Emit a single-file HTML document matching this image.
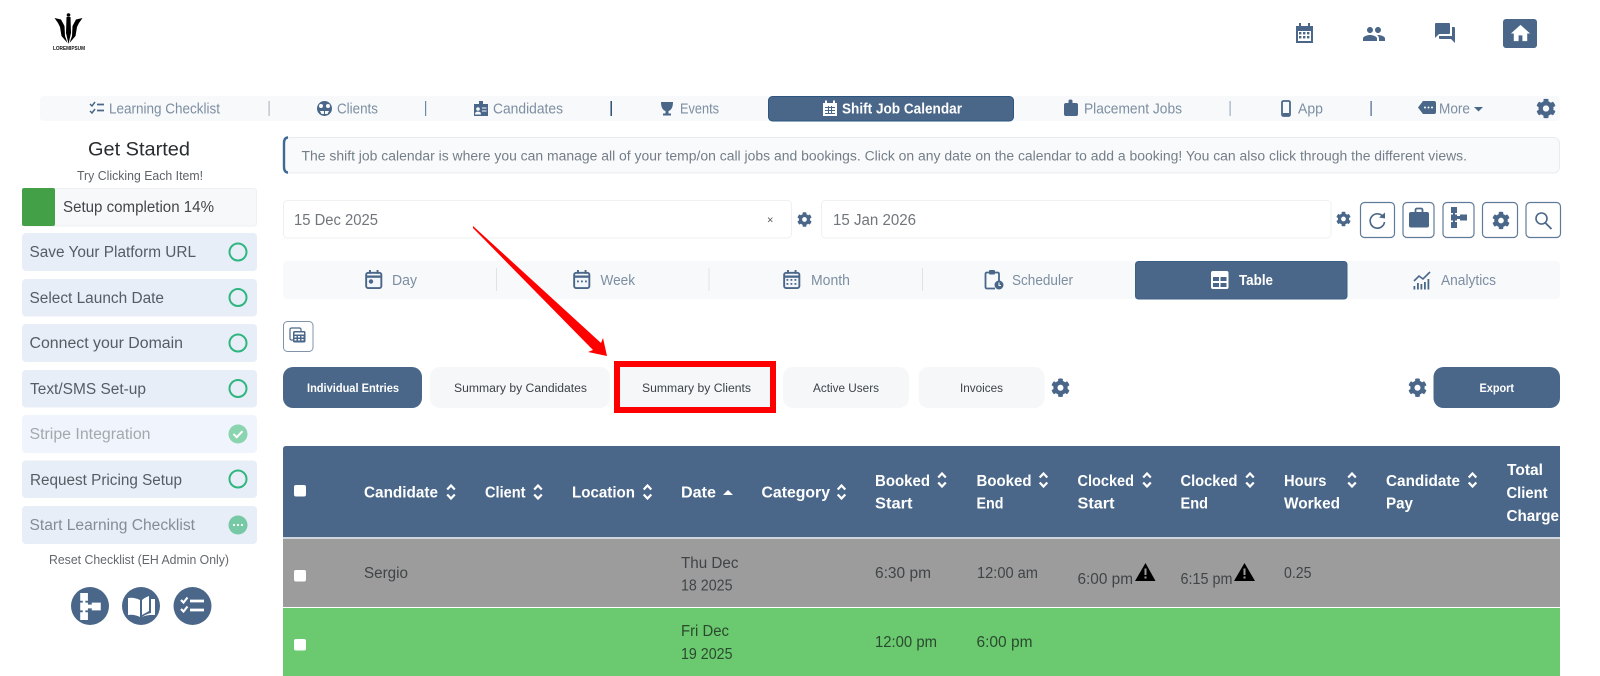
<!DOCTYPE html>
<html lang="en">
<head>
<meta charset="utf-8">
<title>Shift Job Calendar</title>
<style>
html,body{margin:0;padding:0;background:#fff;width:1600px;height:676px;overflow:hidden}
svg{display:block}
text{font-family:"Liberation Sans",sans-serif}
.n{font-size:14.5px;fill:#7c8ea1}
.v{font-size:15px}
.i{font-size:15.5px;fill:#565c62}
.s{font-size:11.5px;fill:#3c4248}
.w{font-weight:bold;fill:#fff}
.h{font-size:15.5px;font-weight:bold;fill:#fff}
.c{font-size:15.5px;fill:#3f4446}
.d{fill:#2a4a2e}
.p{fill:#4a6789}
</style>
</head>
<body>
<svg xmlns="http://www.w3.org/2000/svg" width="1600" height="676" viewBox="0 0 1600 676">
<defs>
<symbol id="g" viewBox="0 0 512 512"><path d="M487.4 315.7l-42.6-24.6c4.3-23.2 4.3-47 0-70.2l42.6-24.6c4.9-2.8 7.1-8.6 5.5-14-11.1-35.6-30-67.8-54.7-94.6-3.8-4.1-10-5.1-14.8-2.3L380.8 110c-17.9-15.4-38.5-27.3-60.8-35.1V25.8c0-5.6-3.9-10.5-9.4-11.7-36.7-8.2-74.3-7.8-109.2 0-5.5 1.2-9.4 6.1-9.4 11.7V75c-22.2 7.9-42.8 19.8-60.8 35.1L88.7 85.5c-4.9-2.8-11-1.9-14.8 2.3-24.7 26.7-43.6 58.9-54.7 94.6-1.7 5.4.6 11.2 5.5 14L67.3 221c-4.3 23.2-4.3 47 0 70.2l-42.6 24.6c-4.9 2.8-7.1 8.6-5.5 14 11.1 35.6 30 67.8 54.7 94.6 3.8 4.1 10 5.1 14.8 2.3l42.6-24.6c17.9 15.4 38.5 27.3 60.8 35.1v49.2c0 5.6 3.9 10.5 9.4 11.7 36.7 8.2 74.3 7.8 109.2 0 5.5-1.2 9.4-6.1 9.4-11.7v-49.2c22.2-7.9 42.8-19.8 60.8-35.1l42.6 24.6c4.9 2.8 11 1.9 14.8-2.3 24.7-26.7 43.6-58.9 54.7-94.6 1.5-5.5-.7-11.3-5.6-14.1zM256 336c-44.1 0-80-35.9-80-80s35.9-80 80-80 80 35.9 80 80-35.9 80-80 80z"/></symbol>
<symbol id="sort" viewBox="0 0 10 18"><path d="M1.2 6.5L5 2.5L8.8 6.5M1.2 11.5L5 15.5L8.8 11.5" fill="none" stroke="#fff" stroke-width="2.2"/></symbol>
<symbol id="flow" viewBox="0 0 16 21"><path d="M0 0h6v6H0zM2 6h2v9H2zM0 7.5h6v6H0zM6 9h3v3H6zM9 7.5h7v6H9zM0 15h6v6H0z"/></symbol>
<symbol id="cal" viewBox="0 0 18 20"><rect x="1" y="3" width="16" height="16" rx="2" fill="#f3f6fa" stroke="#4a6789" stroke-width="2"/><path d="M1 7h16" stroke="#4a6789" stroke-width="2.4"/><path d="M5 0v4M13 0v4" stroke="#4a6789" stroke-width="2"/></symbol>
</defs>

<!-- logo -->
<circle cx="68.5" cy="15" r="1.8" fill="#000"/>
<polygon points="66.5,17 70.5,17 71,33 68.500,44 66,33"/>
<polygon points="54.500,18 61,19.500 64.500,26 65,36 67.500,43 61.500,36 60,27 58,23"/>
<polygon points="82.500,18 76,19.500 72.500,26 72,36 69.500,43 75.500,36 77,27 79,23"/>
<text x="53" y="50" font-size="5.5" font-weight="bold" textLength="32" lengthAdjust="spacingAndGlyphs" fill="#111">LOREMIPSUM</text>

<!-- top right icons -->
<path class="p" d="M1296 26h3v-3h2v3h7v-3h2v3h3v17h-17z"/>
<g fill="#fff"><rect x="1298" y="31" width="13" height="10"/></g>
<g class="p"><rect x="1299" y="32" width="2.4" height="2.4"/><rect x="1303" y="32" width="2.4" height="2.4"/><rect x="1307" y="32" width="2.4" height="2.4"/><rect x="1299" y="36" width="2.4" height="2.4"/><rect x="1303" y="36" width="2.4" height="2.4"/><rect x="1307" y="36" width="2.4" height="2.4"/></g>
<svg x="1362" y="22" width="24" height="24" viewBox="0 0 24 24"><path class="p" d="M16 11c1.66 0 2.99-1.34 2.99-3S17.66 5 16 5c-1.66 0-3 1.34-3 3s1.34 3 3 3zm-8 0c1.66 0 2.99-1.34 2.99-3S9.66 5 8 5C6.34 5 5 6.34 5 8s1.34 3 3 3zm0 2c-2.33 0-7 1.17-7 3.5V19h14v-2.5c0-2.33-4.67-3.5-7-3.5zm8 0c-.29 0-.62.02-.97.05 1.16.84 1.97 1.97 1.97 3.45V19h6v-2.5c0-2.33-4.67-3.5-7-3.5z"/></svg>
<svg x="1433" y="21" width="24" height="24" viewBox="0 0 24 24"><path class="p" d="M21 6h-2v9H6v2c0 .55.45 1 1 1h11l4 4V7c0-.55-.45-1-1-1zm-4 6V3c0-.55-.45-1-1-1H3c-.55 0-1 .45-1 1v14l4-4h10c.55 0 1-.45 1-1z"/></svg>
<rect class="p" x="1503" y="19" width="34" height="29" rx="3"/>
<svg x="1509" y="22" width="23" height="23" viewBox="0 0 24 24"><path fill="#fff" d="M10 20v-6h4v6h5v-8h3L12 3 2 12h3v8z"/></svg>

<!-- nav -->
<rect x="40" y="96" width="1520" height="25" rx="4" fill="#f8f9fb"/>
<path d="M90 104l2 2 3-4M90 111l2 2 3-4" fill="none" stroke="#4a6789" stroke-width="1.5"/><path d="M97 104.500h7M97 110.500h7" stroke="#4a6789" stroke-width="1.8"/>
<text class="n" x="109" y="113.500" textLength="111" lengthAdjust="spacingAndGlyphs">Learning Checklist</text>
<rect x="268.500" y="101" width="1.200" height="15" fill="#b5bcc4"/>
<circle class="p" cx="324.500" cy="108.500" r="7.500"/><circle cx="321" cy="106" r="2" fill="#f8f9fb"/><circle cx="328" cy="106" r="2" fill="#f8f9fb"/><path d="M320 111h9l-1.500 3h-2.500v-3h-1v3h-2.500z" fill="#f8f9fb"/>
<text class="n" x="337" y="113.500" textLength="41" lengthAdjust="spacingAndGlyphs">Clients</text>
<rect x="425" y="101" width="1.200" height="15" fill="#6f8aa6"/>
<path class="p" d="M474 104h5v-3h4v3h5v12h-14z"/><circle cx="478" cy="109" r="1.800" fill="#f8f9fb"/><path d="M475.500 114c0-2.500 5-2.500 5 0zM482 108h4.500M482 111h4.500" fill="#f8f9fb" stroke="#f8f9fb" stroke-width=".9"/>
<text class="n" x="493" y="113.500" textLength="70" lengthAdjust="spacingAndGlyphs">Candidates</text>
<rect x="610.500" y="101" width="1.400" height="15" fill="#1f4468"/>
<path class="p" d="M661 102h12c0 4-1 8-4.500 9v2.500h2.500v2h-8v-2h2.500V111c-3.500-1-4.500-5-4.500-9z"/>
<text class="n" x="680" y="113.500" textLength="39" lengthAdjust="spacingAndGlyphs">Events</text>
<rect x="768.500" y="96.500" width="245" height="24.500" rx="4" fill="#4a6789" stroke="#2c5680"/>
<path fill="#fff" d="M823 103h2v-2.500h2v2.500h6v-2.500h2v2.500h2v13h-14z"/><g fill="#4a6789"><rect x="825" y="107" width="10" height="1"/><rect x="825" y="110" width="10" height="1"/><rect x="825" y="113" width="10" height="1"/><rect x="828" y="106" width="1" height="8"/><rect x="831" y="106" width="1" height="8"/></g>
<text class="n w" x="842" y="113.500" textLength="120" lengthAdjust="spacingAndGlyphs">Shift Job Calendar</text>
<path class="p" d="M1064 105q0-2 2-2h2.500v-2q0-1.500 2-1.500t2 1.500v2h3.500q2 0 2 2v9q0 2-2 2h-10q-2 0-2-2z"/>
<text class="n" x="1084" y="113.500" textLength="98" lengthAdjust="spacingAndGlyphs">Placement Jobs</text>
<rect x="1229.500" y="101" width="1.200" height="15" fill="#9fb0c0"/>
<rect x="1282" y="101" width="8" height="15" rx="1.500" fill="none" stroke="#4a6789" stroke-width="1.800"/><rect class="p" x="1283" y="113" width="6" height="2.500"/>
<text class="n" x="1298" y="113.500" textLength="25" lengthAdjust="spacingAndGlyphs">App</text>
<rect x="1370.500" y="101" width="1.200" height="15" fill="#4a6789"/>
<path class="p" d="M1423 101h11q2 0 2 2v9q0 2-2 2h-11l-5-6.500z"/><g fill="#fff"><circle cx="1425" cy="107.500" r="1"/><circle cx="1428.500" cy="107.500" r="1"/><circle cx="1432" cy="107.500" r="1"/></g>
<text class="n" x="1439" y="113.500" textLength="31" lengthAdjust="spacingAndGlyphs">More</text>
<polygon class="p" points="1474,107 1483,107 1478.500,111.500"/>
<use href="#g" x="1536" y="98.500" width="20" height="20" fill="#4a6789"/>

<!-- info -->
<rect x="284" y="137.500" width="1275.500" height="35.500" rx="6" fill="#f9fafc" stroke="#e8ebef"/>
<path d="M288 137.500q-4 0-4 6v23q0 6 4 6" fill="none" stroke="#3d6a94" stroke-width="2.400"/>
<text x="301.500" y="160.500" font-size="13.5" fill="#747e88" textLength="1165.500" lengthAdjust="spacingAndGlyphs">The shift job calendar is where you can manage all of your temp/on call jobs and bookings. Click on any date on the calendar to add a booking! You can also click through the different views.</text>

<!-- sidebar -->
<text x="88" y="155.500" font-size="19" fill="#2a2d30" textLength="102" lengthAdjust="spacingAndGlyphs">Get Started</text>
<text x="77" y="180" font-size="12.5" fill="#5f6368" textLength="126" lengthAdjust="spacingAndGlyphs">Try Clicking Each Item!</text>
<rect x="22.500" y="188.500" width="234" height="37.500" rx="3" fill="#f7f8fa" stroke="#eef0f2"/>
<rect x="22" y="188" width="33" height="38" rx="2" fill="#43a047"/>
<text x="63" y="212" font-size="15.5" fill="#42464a" textLength="151" lengthAdjust="spacingAndGlyphs">Setup completion 14%</text>

<g fill="#e8eef8">
<rect x="22" y="233" width="235" height="38" rx="4"/>
<rect x="22" y="279" width="235" height="37.500" rx="4"/>
<rect x="22" y="324" width="235" height="38" rx="4"/>
<rect x="22" y="370" width="235" height="37.500" rx="4"/>
<rect x="22" y="415" width="235" height="38" rx="4" fill="#f0f4fc"/>
<rect x="22" y="460.500" width="235" height="37.500" rx="4"/>
<rect x="22" y="506" width="235" height="38" rx="4"/>
</g>
<text class="i" x="29.500" y="257" textLength="166.500" lengthAdjust="spacingAndGlyphs">Save Your Platform URL</text>
<text class="i" x="29.500" y="303" textLength="134.500" lengthAdjust="spacingAndGlyphs">Select Launch Date</text>
<text class="i" x="29.500" y="348" textLength="153.500" lengthAdjust="spacingAndGlyphs">Connect your Domain</text>
<text class="i" x="30" y="394" textLength="116" lengthAdjust="spacingAndGlyphs">Text/SMS Set-up</text>
<text x="29.500" y="439" font-size="15.5" fill="#a3a8ae" textLength="121" lengthAdjust="spacingAndGlyphs">Stripe Integration</text>
<text class="i" x="30" y="485" textLength="152" lengthAdjust="spacingAndGlyphs">Request Pricing Setup</text>
<text x="29.500" y="530" font-size="15.5" fill="#868c92" textLength="165.500" lengthAdjust="spacingAndGlyphs">Start Learning Checklist</text>
<g fill="none" stroke="#2fb67f" stroke-width="2">
<circle cx="238" cy="252" r="8.500"/><circle cx="238" cy="297.500" r="8.500"/><circle cx="238" cy="343" r="8.500"/><circle cx="238" cy="388.500" r="8.500"/><circle cx="238" cy="479" r="8.500"/>
</g>
<circle cx="238" cy="434" r="9.500" fill="#8bd4b0"/><path d="M233.500 434l3.200 3.200 5.800-6" fill="none" stroke="#fff" stroke-width="2"/>
<circle cx="238" cy="525" r="9.500" fill="#76c9a4"/><g fill="#fff"><circle cx="234" cy="525" r="1.100"/><circle cx="238" cy="525" r="1.100"/><circle cx="242" cy="525" r="1.100"/></g>
<text x="49" y="564" font-size="12.5" fill="#63686d" textLength="180" lengthAdjust="spacingAndGlyphs">Reset Checklist (EH Admin Only)</text>
<circle class="p" cx="90" cy="606" r="19"/><circle class="p" cx="141" cy="606" r="19"/><circle class="p" cx="192.500" cy="606" r="19"/>
<use href="#flow" x="80" y="593" width="21" height="27" fill="#fff"/>
<path fill="#fff" d="M128 598q6-1 12 2v17q-6-3-12-2zM142 600q2-2 7-4v15l-7 4zM151 599h4v16q-7-.500-13 2 4-3 9-4z"/>
<path d="M181 600l2.500 2.500 4-5M181 609l2.500 2.500 4-5" fill="none" stroke="#fff" stroke-width="2.200"/><path d="M190 601h14M190 610h14" stroke="#fff" stroke-width="2.800"/>

<!-- date inputs -->
<rect x="283.500" y="200.500" width="508" height="37.500" rx="4" fill="#fff" stroke="#eef0f2"/>
<text x="294" y="225" font-size="15.5" fill="#70767c" textLength="84" lengthAdjust="spacingAndGlyphs">15 Dec 2025</text>
<text x="767" y="223.500" font-size="11" fill="#555">×</text>
<use href="#g" x="797" y="212" width="15" height="15" fill="#4a6789"/>
<rect x="821.500" y="200.500" width="509.500" height="37.500" rx="4" fill="#fff" stroke="#eef0f2"/>
<text x="833" y="225" font-size="15.5" fill="#70767c" textLength="83" lengthAdjust="spacingAndGlyphs">15 Jan 2026</text>
<use href="#g" x="1336" y="211.500" width="15" height="15" fill="#4a6789"/>
<g fill="#fff" stroke="#5f7b99" stroke-width="1.200">
<rect x="1360.500" y="202.500" width="34" height="35" rx="4"/>
<rect x="1403" y="202.500" width="31" height="35" rx="4"/>
<rect x="1443" y="202.500" width="31" height="35" rx="4"/>
<rect x="1482.500" y="202.500" width="35" height="35" rx="4"/>
<rect x="1526" y="202.500" width="34.500" height="35" rx="4"/>
</g>
<path d="M1383 216.500a7.200 7.200 0 1 0 1.500 5.500" fill="none" stroke="#4a6789" stroke-width="1.600"/><polygon class="p" points="1385,212.500 1385,218.500 1379,217.500"/>
<rect x="1415.500" y="208.500" width="7" height="5" rx="1.500" fill="none" stroke="#4a6789" stroke-width="1.800"/>
<rect class="p" x="1409" y="212" width="20" height="15.500" rx="2"/>
<use href="#flow" x="1451" y="207" width="16" height="21" fill="#4a6789"/>
<use href="#g" x="1492" y="211" width="18" height="19" fill="#4a6789"/>
<circle cx="1541.500" cy="218.500" r="5.500" fill="none" stroke="#4a6789" stroke-width="1.600"/><path d="M1545.500 223l6 6" stroke="#4a6789" stroke-width="1.800"/>

<!-- views -->
<rect x="283" y="261" width="1277" height="38" rx="4" fill="#f8f9fb"/>
<use href="#cal" x="365" y="270" width="17.500" height="19"/><circle class="p" cx="371" cy="281.500" r="2.200"/>
<text class="n v" x="392" y="285" textLength="25" lengthAdjust="spacingAndGlyphs">Day</text>
<rect x="496" y="268" width="1" height="23" fill="#dfe3e7"/>
<use href="#cal" x="573" y="270" width="17.500" height="19"/><g class="p"><rect x="577" y="280.500" width="1.800" height="1.800"/><rect x="581" y="280.500" width="1.800" height="1.800"/><rect x="585" y="280.500" width="1.800" height="1.800"/></g>
<text class="n v" x="600.500" y="285" textLength="34.500" lengthAdjust="spacingAndGlyphs">Week</text>
<rect x="708.500" y="268" width="1" height="23" fill="#dfe3e7"/>
<use href="#cal" x="783" y="270" width="17.500" height="19"/><g class="p"><rect x="786.500" y="279" width="1.800" height="1.800"/><rect x="790.500" y="279" width="1.800" height="1.800"/><rect x="794.500" y="279" width="1.800" height="1.800"/><rect x="786.500" y="283" width="1.800" height="1.800"/><rect x="790.500" y="283" width="1.800" height="1.800"/><rect x="794.500" y="283" width="1.800" height="1.800"/></g>
<text class="n v" x="811" y="285" textLength="39" lengthAdjust="spacingAndGlyphs">Month</text>
<rect x="922" y="268" width="1" height="23" fill="#dfe3e7"/>
<path d="M999 285v-11q0-1.500-1.500-1.500h-10.500q-1.500 0-1.500 1.500v13q0 1.500 1.500 1.500h8" fill="none" stroke="#4a6789" stroke-width="1.800"/><rect class="p" x="989" y="270" width="6" height="4.500" rx="1"/><circle class="p" cx="999" cy="285" r="4.500"/><path d="M999 282.500v3h2" fill="none" stroke="#fff" stroke-width="1"/>
<text class="n v" x="1012" y="285" textLength="61" lengthAdjust="spacingAndGlyphs">Scheduler</text>
<rect x="1135.500" y="261.500" width="211.500" height="37.500" rx="3" fill="#4a6789" stroke="#3c5f85"/>
<rect x="1211" y="271" width="17.500" height="18" rx="2" fill="#fff"/><g class="p"><rect x="1213" y="277" width="6" height="4"/><rect x="1220.500" y="277" width="6" height="4"/><rect x="1213" y="283" width="6" height="4"/><rect x="1220.500" y="283" width="6" height="4"/></g>
<text class="n v w" x="1239" y="285" textLength="34" lengthAdjust="spacingAndGlyphs">Table</text>
<path d="M1414 281l5-5 4 3 7-7" fill="none" stroke="#4a6789" stroke-width="1.600"/><g class="p"><rect x="1413.500" y="286" width="1.800" height="3.500"/><rect x="1417" y="283" width="1.800" height="6.500"/><rect x="1420.500" y="284" width="1.800" height="5.500"/><rect x="1424" y="282" width="1.800" height="7.500"/><rect x="1427.500" y="279" width="1.800" height="10.500"/></g>
<text class="n v" x="1441" y="285" textLength="55" lengthAdjust="spacingAndGlyphs">Analytics</text>

<!-- small button -->
<rect x="283.500" y="321.500" width="29.500" height="30" rx="4" fill="#fff" stroke="#7f94a9"/>
<rect x="290" y="328" width="11" height="12" rx="1.500" fill="none" stroke="#4a6789" stroke-width="1.200"/><rect class="p" x="293" y="331" width="12.500" height="11.500" rx="1.500"/><g fill="#fff"><rect x="294.500" y="332.500" width="9.500" height="2"/><rect x="294.500" y="336" width="2" height="1.500"/><rect x="298" y="336" width="2" height="1.500"/><rect x="301.500" y="336" width="2" height="1.500"/><rect x="294.500" y="339" width="2" height="1.500"/><rect x="298" y="339" width="2" height="1.500"/><rect x="301.500" y="339" width="2" height="1.500"/></g>

<!-- tabs -->
<rect x="283" y="367" width="139" height="41" rx="10" fill="#4a6789"/>
<rect x="430" y="367" width="180" height="41" rx="10" fill="#f6f7f9"/>
<rect x="617" y="364" width="156" height="46" fill="#f6f7f9" stroke="#ff0000" stroke-width="6"/>
<rect x="783" y="367" width="126" height="41" rx="10" fill="#f6f7f9"/>
<rect x="918.500" y="367" width="126" height="41" rx="10" fill="#f6f7f9"/>
<text class="s w" x="307" y="392" textLength="92" lengthAdjust="spacingAndGlyphs">Individual Entries</text>
<text class="s" x="454" y="392" textLength="133" lengthAdjust="spacingAndGlyphs">Summary by Candidates</text>
<text class="s" x="642" y="392" textLength="109" lengthAdjust="spacingAndGlyphs">Summary by Clients</text>
<text class="s" x="813" y="392" textLength="66" lengthAdjust="spacingAndGlyphs">Active Users</text>
<text class="s" x="960" y="392" textLength="43" lengthAdjust="spacingAndGlyphs">Invoices</text>
<use href="#g" x="1051" y="378" width="19" height="19.500" fill="#4a6789"/>
<use href="#g" x="1408" y="378" width="19" height="19.500" fill="#4a6789"/>
<rect x="1433.500" y="367" width="126.500" height="41" rx="10" fill="#4a6789"/>
<text class="s w" x="1479.500" y="392" textLength="34.500" lengthAdjust="spacingAndGlyphs">Export</text>

<!-- arrow -->
<polygon points="473,226 601,343 603,338 607,356 588,352 593,350 473,228" fill="#ff0000"/>

<!-- table -->
<path d="M283 449q0-3 3-3h1274v91H283z" fill="#4a6789"/>
<rect x="283" y="537" width="1277" height="2" fill="#cfd6de"/>
<rect x="283" y="539" width="1277" height="68" fill="#9c9c9c"/>
<rect x="283" y="608" width="1277" height="68" fill="#6bc96f"/>
<g fill="#fff"><rect x="294" y="485" width="12" height="11.500" rx="2"/><rect x="294" y="570" width="12" height="11.500" rx="2"/><rect x="294" y="639" width="12" height="11.500" rx="2"/></g>

<text class="h" x="364" y="497.500" textLength="74" lengthAdjust="spacingAndGlyphs">Candidate</text><use href="#sort" x="446" y="483" width="10" height="18"/>
<text class="h" x="485" y="497.500" textLength="40.500" lengthAdjust="spacingAndGlyphs">Client</text><use href="#sort" x="533" y="483" width="10" height="18"/>
<text class="h" x="572" y="497.500" textLength="63" lengthAdjust="spacingAndGlyphs">Location</text><use href="#sort" x="642.500" y="483" width="10" height="18"/>
<text class="h" x="681" y="497.500" textLength="35" lengthAdjust="spacingAndGlyphs">Date</text><polygon points="723,495 733,495 728,490" fill="#fff"/>
<text class="h" x="761.500" y="497.500" textLength="68.500" lengthAdjust="spacingAndGlyphs">Category</text><use href="#sort" x="836.500" y="483" width="10" height="18"/>

<text class="h" x="875" y="486" textLength="55" lengthAdjust="spacingAndGlyphs">Booked</text><use href="#sort" x="937" y="471" width="10" height="18"/>
<text class="h" x="875" y="508.500" textLength="37.500" lengthAdjust="spacingAndGlyphs">Start</text>
<text class="h" x="976.500" y="486" textLength="55" lengthAdjust="spacingAndGlyphs">Booked</text><use href="#sort" x="1038.500" y="471" width="10" height="18"/>
<text class="h" x="976.500" y="508.500" textLength="27" lengthAdjust="spacingAndGlyphs">End</text>
<text class="h" x="1077.500" y="486" textLength="56.500" lengthAdjust="spacingAndGlyphs">Clocked</text><use href="#sort" x="1142" y="471" width="10" height="18"/>
<text class="h" x="1077.500" y="508.500" textLength="37" lengthAdjust="spacingAndGlyphs">Start</text>
<text class="h" x="1180.500" y="486" textLength="57" lengthAdjust="spacingAndGlyphs">Clocked</text><use href="#sort" x="1245" y="471" width="10" height="18"/>
<text class="h" x="1180.500" y="508.500" textLength="27.500" lengthAdjust="spacingAndGlyphs">End</text>
<text class="h" x="1284" y="486" textLength="42.500" lengthAdjust="spacingAndGlyphs">Hours</text><use href="#sort" x="1347" y="471" width="10" height="18"/>
<text class="h" x="1284" y="508.500" textLength="56" lengthAdjust="spacingAndGlyphs">Worked</text>
<text class="h" x="1386" y="486" textLength="74" lengthAdjust="spacingAndGlyphs">Candidate</text><use href="#sort" x="1467.500" y="471" width="10" height="18"/>
<text class="h" x="1386" y="508.500" textLength="27" lengthAdjust="spacingAndGlyphs">Pay</text>
<text class="h" x="1507" y="475" textLength="36" lengthAdjust="spacingAndGlyphs">Total</text>
<text class="h" x="1506.500" y="498" textLength="41" lengthAdjust="spacingAndGlyphs">Client</text>
<text class="h" x="1506.500" y="521" textLength="52.500" lengthAdjust="spacingAndGlyphs">Charge</text>

<text class="c" x="364" y="578" textLength="44" lengthAdjust="spacingAndGlyphs">Sergio</text>
<text class="c" x="681" y="568" textLength="57.500" lengthAdjust="spacingAndGlyphs">Thu Dec</text>
<text class="c" x="681" y="590.500" textLength="51.500" lengthAdjust="spacingAndGlyphs">18 2025</text>
<text class="c" x="875" y="578" textLength="56" lengthAdjust="spacingAndGlyphs">6:30 pm</text>
<text class="c" x="977" y="578" textLength="61" lengthAdjust="spacingAndGlyphs">12:00 am</text>
<text class="c" x="1077.500" y="584" textLength="55.500" lengthAdjust="spacingAndGlyphs">6:00 pm</text>
<polygon points="1145.500,563 1155.500,581 1135,581" fill="#000"/><rect x="1144.500" y="568.500" width="2" height="6.500" fill="#9c9c9c"/><rect x="1144.500" y="576.500" width="2" height="2" fill="#9c9c9c"/>
<text class="c" x="1180.500" y="584" textLength="52" lengthAdjust="spacingAndGlyphs">6:15 pm</text>
<polygon points="1244.500,563 1255,581 1234,581" fill="#000"/><rect x="1243.500" y="568.500" width="2" height="6.500" fill="#9c9c9c"/><rect x="1243.500" y="576.500" width="2" height="2" fill="#9c9c9c"/>
<text class="c" x="1284" y="578" textLength="27.500" lengthAdjust="spacingAndGlyphs">0.25</text>

<text class="c d" x="681" y="636" textLength="48" lengthAdjust="spacingAndGlyphs">Fri Dec</text>
<text class="c d" x="681" y="659" textLength="51.500" lengthAdjust="spacingAndGlyphs">19 2025</text>
<text class="c d" x="875" y="647" textLength="62" lengthAdjust="spacingAndGlyphs">12:00 pm</text>
<text class="c d" x="976.500" y="647" textLength="56" lengthAdjust="spacingAndGlyphs">6:00 pm</text>
</svg>
</body>
</html>
